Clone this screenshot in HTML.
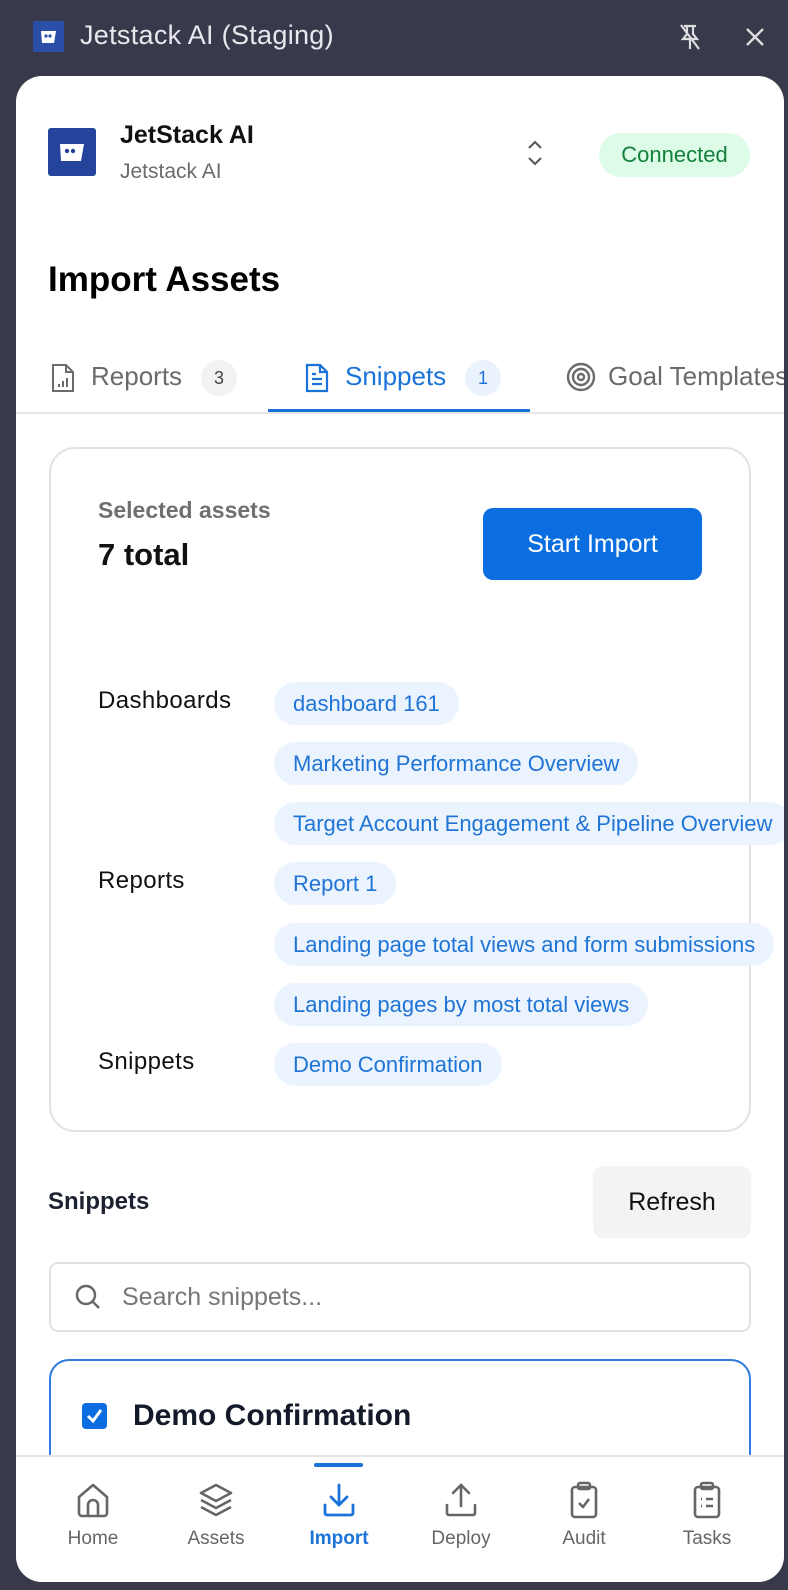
<!DOCTYPE html>
<html><head><meta charset="utf-8"><style>
*{box-sizing:border-box;margin:0;padding:0}
body{width:788px;height:1590px;background:#383a4c;font-family:"Liberation Sans",sans-serif;position:relative;overflow:hidden}
.abs{position:absolute}
.panel{position:absolute;left:16px;top:76px;width:768px;height:1506px;background:#fff;border-radius:26px;overflow:hidden}
.chip{position:absolute;left:258px;height:43px;border-radius:22px;background:#ebf4fe;color:#1f74d6;font-size:22px;line-height:43px;padding:0 19px;white-space:nowrap}
.lbl{position:absolute;left:82px;font-size:24px;color:#111;letter-spacing:0.4px}
.nav{position:absolute;top:1463px;width:120px;text-align:center;font-size:19px;color:#666}
.nav svg{display:block;margin:0 auto 9px}
</style></head><body>
<div class="abs" style="left:33px;top:21px;width:31px;height:31px;background:#2b4ea8"></div>
<svg class="abs" style="left:37px;top:26px" width="24" height="22" viewBox="0 0 24 22"><path d="M4 5h15l-2 12H5z" fill="#fff"/><circle cx="9" cy="10" r="1.6" fill="#2b4ea8"/><circle cx="13" cy="10" r="1.6" fill="#2b4ea8"/></svg>
<div class="abs" style="left:80px;top:20px;font-size:27px;color:#e8e8ee;letter-spacing:0.3px">Jetstack AI (Staging)</div>
<svg class="abs" style="left:676px;top:22px" width="28" height="30" viewBox="0 0 28 30" fill="none" stroke="#ddd" stroke-width="2.2"><path d="M8 4h12M11 4v8l-4 5h14l-4-5V4M14 17v10M5 3l18 24"/></svg>
<svg class="abs" style="left:744px;top:26px" width="22" height="22" viewBox="0 0 22 22" stroke="#ddd" stroke-width="2.4"><path d="M3 3l16 16M19 3L3 19"/></svg>

<div class="panel">
 <div class="abs" style="left:32px;top:52px;width:48px;height:48px;background:#23449a;border-radius:3px"></div>
 <svg class="abs" style="left:38px;top:59px" width="36" height="34" viewBox="0 0 36 34"><path d="M6 9h24l-3 17H7z" fill="#fff"/><circle cx="13" cy="16" r="2.2" fill="#23449a"/><circle cx="19" cy="16" r="2.2" fill="#23449a"/></svg>
 <div class="abs" style="left:104px;top:45px;font-size:25px;font-weight:bold;color:#111">JetStack AI</div>
 <div class="abs" style="left:104px;top:84px;font-size:21px;color:#6b6b6b">Jetstack AI</div>
 <svg class="abs" style="left:509px;top:62px" width="20" height="30" viewBox="0 0 20 30" fill="none" stroke="#555" stroke-width="2"><path d="M4 10l6-6 6 6M4 20l6 6 6-6"/></svg>
 <div class="abs" style="left:583px;top:57px;width:151px;height:44px;border-radius:22px;background:#dcfce7;color:#15803d;font-size:22px;line-height:44px;text-align:center">Connected</div>
 <div class="abs" style="left:32px;top:184px;font-size:35px;font-weight:bold;color:#000">Import Assets</div>

 <svg class="abs" style="left:34px;top:286px" width="26" height="32" viewBox="0 0 26 32" fill="none" stroke="#6b6b6b" stroke-width="2"><path d="M3 3h13l7 7v19H3z"/><path d="M16 3v7h7M9 25v-3M13 25v-6M17 25v-9"/></svg>
 <div class="abs" style="left:75px;top:285px;font-size:26px;color:#6b6b6b">Reports</div>
 <div class="abs" style="left:185px;top:284px;width:36px;height:36px;border-radius:18px;background:#f2f2f2;color:#444;font-size:18px;line-height:36px;text-align:center">3</div>
 <svg class="abs" style="left:288px;top:286px" width="26" height="32" viewBox="0 0 26 32" fill="none" stroke="#1a73d9" stroke-width="2.2"><path d="M3 3h13l7 7v19H3z"/><path d="M16 3v7h7M8 17h10M8 22h10M8 12h4"/></svg>
 <div class="abs" style="left:329px;top:285px;font-size:26px;color:#1a73d9">Snippets</div>
 <div class="abs" style="left:449px;top:284px;width:36px;height:36px;border-radius:18px;background:#eaf3fd;color:#1a73d9;font-size:18px;line-height:36px;text-align:center">1</div>
 <svg class="abs" style="left:549px;top:285px" width="32" height="32" viewBox="0 0 32 32" fill="none" stroke="#6b6b6b" stroke-width="2.4"><circle cx="16" cy="16" r="13"/><circle cx="16" cy="16" r="8"/><circle cx="16" cy="16" r="3"/></svg>
 <div class="abs" style="left:592px;top:285px;font-size:26px;color:#6b6b6b;white-space:nowrap">Goal Templates</div>
 <div class="abs" style="left:0;top:336px;width:768px;height:2px;background:#e6e6e6"></div>
 <div class="abs" style="left:252px;top:333px;width:262px;height:3px;background:#1a73d9"></div>

 <div class="abs" style="left:33px;top:371px;width:702px;height:685px;border:2px solid #e2e2e2;border-radius:26px"></div>
 <div class="abs" style="left:82px;top:421px;font-size:23px;color:#707070;font-weight:bold">Selected assets</div>
 <div class="abs" style="left:82px;top:461px;font-size:31px;font-weight:bold;color:#111">7 total</div>
 <div class="abs" style="left:467px;top:432px;width:219px;height:72px;border-radius:10px;background:#0a6ee0;color:#fff;font-size:25px;line-height:72px;text-align:center">Start Import</div>

 <div class="lbl" style="top:611px">Dashboards</div>
 <div class="chip" style="top:606px">dashboard 161</div>
 <div class="chip" style="top:666px">Marketing Performance Overview</div>
 <div class="chip" style="top:726px">Target Account Engagement &amp; Pipeline Overview</div>
 <div class="lbl" style="top:791px">Reports</div>
 <div class="chip" style="top:786px">Report 1</div>
 <div class="chip" style="top:847px">Landing page total views and form submissions</div>
 <div class="chip" style="top:907px">Landing pages by most total views</div>
 <div class="lbl" style="top:972px">Snippets</div>
 <div class="chip" style="top:967px">Demo Confirmation</div>

 <div class="abs" style="left:32px;top:1112px;font-size:24px;font-weight:bold;color:#1d2230">Snippets</div>
 <div class="abs" style="left:577px;top:1090px;width:158px;height:72px;border-radius:10px;background:#f3f3f3;color:#111;font-size:25px;line-height:72px;text-align:center">Refresh</div>
 <div class="abs" style="left:33px;top:1186px;width:702px;height:70px;border:2px solid #e2e2e2;border-radius:9px"></div>
 <svg class="abs" style="left:58px;top:1207px" width="28" height="28" viewBox="0 0 28 28" fill="none" stroke="#666" stroke-width="2.4"><circle cx="12" cy="12" r="9"/><path d="M19 19l6 6"/></svg>
 <div class="abs" style="left:106px;top:1207px;font-size:25px;color:#777">Search snippets...</div>
 <div class="abs" style="left:33px;top:1283px;width:702px;height:200px;border:2px solid #2f7be0;border-radius:20px"></div>
 <div class="abs" style="left:66px;top:1327px;width:25px;height:26px;border-radius:4px;background:#0a6ee0"></div>
 <svg class="abs" style="left:66px;top:1327px" width="25" height="26" viewBox="0 0 25 26" fill="none" stroke="#fff" stroke-width="3"><path d="M6 13l5 5 8-11"/></svg>
 <div class="abs" style="left:117px;top:1323px;font-size:30px;font-weight:bold;color:#141a29">Demo Confirmation</div>

 <div class="abs" style="left:0;top:1379px;width:768px;height:130px;background:#fff;border-top:2px solid #e6e6e6"></div>
 <div class="abs" style="left:298px;top:1387px;width:49px;height:4px;background:#1a73d9;border-radius:2px"></div>
 <div class="nav" style="left:17px;top:1405px"><svg width="36" height="38" viewBox="0 0 36 38" fill="none" stroke="#666" stroke-width="2.6" stroke-linejoin="round"><path d="M4 16L18 4l14 12v16a3 3 0 0 1-3 3H7a3 3 0 0 1-3-3z"/><path d="M13 35V24a5 5 0 0 1 10 0v11"/></svg>Home</div>
 <div class="nav" style="left:140px;top:1405px"><svg width="38" height="38" viewBox="0 0 38 38" fill="none" stroke="#666" stroke-width="2.6" stroke-linejoin="round"><path d="M19 4l15 8-15 8-15-8z"/><path d="M4 19l15 8 15-8M4 26l15 8 15-8"/></svg>Assets</div>
 <div class="nav" style="left:263px;top:1405px;color:#1a73d9;font-weight:bold"><svg width="38" height="38" viewBox="0 0 38 38" fill="none" stroke="#1a73d9" stroke-width="2.8" stroke-linecap="round"><path d="M19 4v19M11 16l8 8 8-8M5 24v8a2 2 0 0 0 2 2h24a2 2 0 0 0 2-2v-8"/></svg>Import</div>
 <div class="nav" style="left:385px;top:1405px"><svg width="38" height="38" viewBox="0 0 38 38" fill="none" stroke="#666" stroke-width="2.6" stroke-linecap="round"><path d="M19 25V5M11 12l8-8 8 8M5 24v8a2 2 0 0 0 2 2h24a2 2 0 0 0 2-2v-8"/></svg>Deploy</div>
 <div class="nav" style="left:508px;top:1405px"><svg width="38" height="38" viewBox="0 0 38 38" fill="none" stroke="#666" stroke-width="2.6" stroke-linejoin="round"><rect x="7" y="6" width="24" height="30" rx="3"/><rect x="13" y="2" width="12" height="6" rx="2"/><path d="M14 22l4 4 6-8"/></svg>Audit</div>
 <div class="nav" style="left:631px;top:1405px"><svg width="38" height="38" viewBox="0 0 38 38" fill="none" stroke="#666" stroke-width="2.6" stroke-linejoin="round"><rect x="7" y="6" width="24" height="30" rx="3"/><rect x="13" y="2" width="12" height="6" rx="2"/><path d="M13 18h1M18 18h7M13 25h1M18 25h7"/></svg>Tasks</div>
</div>
</body></html>
